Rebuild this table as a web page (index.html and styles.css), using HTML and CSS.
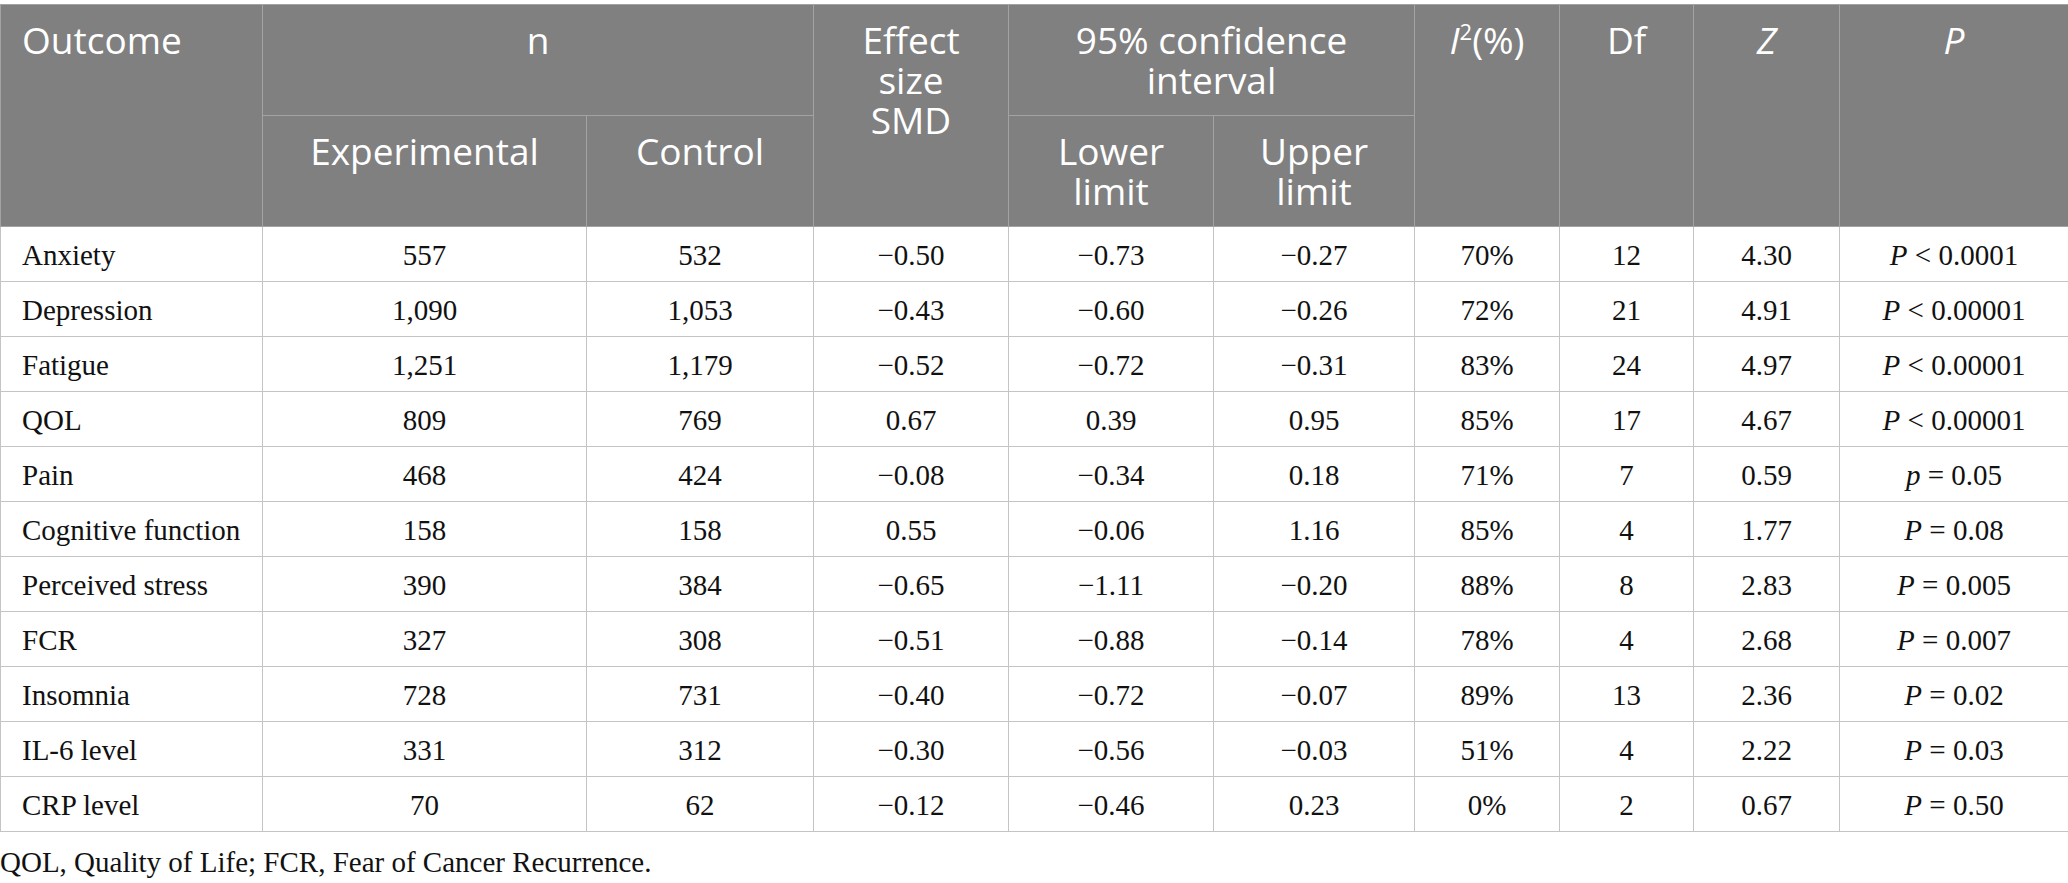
FILE: index.html
```html
<!DOCTYPE html>
<html lang="en">
<head>
<meta charset="utf-8">
<title>Meta-analysis outcomes</title>
<link rel="stylesheet" href="styles.css">
</head>
<body>
<div class="wrap">
<table class="results">
  <colgroup>
    <col class="c-outcome">
    <col class="c-exp">
    <col class="c-ctrl">
    <col class="c-eff">
    <col class="c-low">
    <col class="c-up">
    <col class="c-i2">
    <col class="c-df">
    <col class="c-z">
    <col class="c-p">
  </colgroup>
  <thead>
    <tr class="h1">
      <th rowspan="2" class="left">Outcome</th>
      <th colspan="2">n</th>
      <th rowspan="2">Effect<br>size<br>SMD</th>
      <th colspan="2">95% confidence<br>interval</th>
      <th rowspan="2"><i>I</i><sup>2</sup>(%)</th>
      <th rowspan="2">Df</th>
      <th rowspan="2"><i>Z</i></th>
      <th rowspan="2"><i>P</i></th>
    </tr>
    <tr class="h2">
      <th>Experimental</th>
      <th>Control</th>
      <th>Lower<br>limit</th>
      <th>Upper<br>limit</th>
    </tr>
  </thead>
  <tbody>
    <tr><td class="left">Anxiety</td><td>557</td><td>532</td><td>−0.50</td><td>−0.73</td><td>−0.27</td><td>70%</td><td>12</td><td>4.30</td><td><i>P</i> &lt; 0.0001</td></tr>
    <tr><td class="left">Depression</td><td>1,090</td><td>1,053</td><td>−0.43</td><td>−0.60</td><td>−0.26</td><td>72%</td><td>21</td><td>4.91</td><td><i>P</i> &lt; 0.00001</td></tr>
    <tr><td class="left">Fatigue</td><td>1,251</td><td>1,179</td><td>−0.52</td><td>−0.72</td><td>−0.31</td><td>83%</td><td>24</td><td>4.97</td><td><i>P</i> &lt; 0.00001</td></tr>
    <tr><td class="left">QOL</td><td>809</td><td>769</td><td>0.67</td><td>0.39</td><td>0.95</td><td>85%</td><td>17</td><td>4.67</td><td><i>P</i> &lt; 0.00001</td></tr>
    <tr><td class="left">Pain</td><td>468</td><td>424</td><td>−0.08</td><td>−0.34</td><td>0.18</td><td>71%</td><td>7</td><td>0.59</td><td><i>p</i> = 0.05</td></tr>
    <tr><td class="left">Cognitive function</td><td>158</td><td>158</td><td>0.55</td><td>−0.06</td><td>1.16</td><td>85%</td><td>4</td><td>1.77</td><td><i>P</i> = 0.08</td></tr>
    <tr><td class="left">Perceived stress</td><td>390</td><td>384</td><td>−0.65</td><td>−1.11</td><td>−0.20</td><td>88%</td><td>8</td><td>2.83</td><td><i>P</i> = 0.005</td></tr>
    <tr><td class="left">FCR</td><td>327</td><td>308</td><td>−0.51</td><td>−0.88</td><td>−0.14</td><td>78%</td><td>4</td><td>2.68</td><td><i>P</i> = 0.007</td></tr>
    <tr><td class="left">Insomnia</td><td>728</td><td>731</td><td>−0.40</td><td>−0.72</td><td>−0.07</td><td>89%</td><td>13</td><td>2.36</td><td><i>P</i> = 0.02</td></tr>
    <tr><td class="left">IL-6 level</td><td>331</td><td>312</td><td>−0.30</td><td>−0.56</td><td>−0.03</td><td>51%</td><td>4</td><td>2.22</td><td><i>P</i> = 0.03</td></tr>
    <tr><td class="left">CRP level</td><td>70</td><td>62</td><td>−0.12</td><td>−0.46</td><td>0.23</td><td>0%</td><td>2</td><td>0.67</td><td><i>P</i> = 0.50</td></tr>
  </tbody>
</table>
<p class="note">QOL, Quality of Life; FCR, Fear of Cancer Recurrence.</p>
</div>
</body>
</html>
```

FILE: styles.css
```css
html, body {
  margin: 0;
  padding: 0;
  background: #ffffff;
}

.wrap {
  padding-top: 4px;
}

.results {
  border-collapse: collapse;
  table-layout: fixed;
  width: 2068px;
  border: 1px solid #c4c4c4;
}

.c-outcome { width: 262px; }
.c-exp { width: 324px; }
.c-ctrl { width: 227px; }
.c-eff { width: 195px; }
.c-low { width: 205px; }
.c-up { width: 201px; }
.c-i2 { width: 145px; }
.c-df { width: 134px; }
.c-z { width: 146px; }
.c-p { width: 229px; }

.results th {
  background: #808080;
  color: #ffffff;
  font-family: "Open Sans", "Noto Sans", sans-serif;
  font-weight: 400;
  font-size: 37px;
  line-height: 40px;
  text-align: center;
  vertical-align: top;
  padding: 15px 6px;
  border: 1px solid #a3a3a3;
}

.results th sup {
  font-size: 22px;
  line-height: 0;
  vertical-align: 14px;
}

.results td {
  font-family: "Liberation Serif", "Times New Roman", serif;
  font-size: 29px;
  color: #111111;
  text-align: center;
  vertical-align: middle;
  height: 55px;
  padding: 2px 10px 0;
  box-sizing: border-box;
  border: 1px solid #c4c4c4;
}

.results .left {
  text-align: left;
  padding-left: 21px;
}

.note {
  margin: 14px 0 0;
  font-family: "Liberation Serif", "Times New Roman", serif;
  font-size: 29px;
  line-height: 32px;
  color: #111111;
}
```
